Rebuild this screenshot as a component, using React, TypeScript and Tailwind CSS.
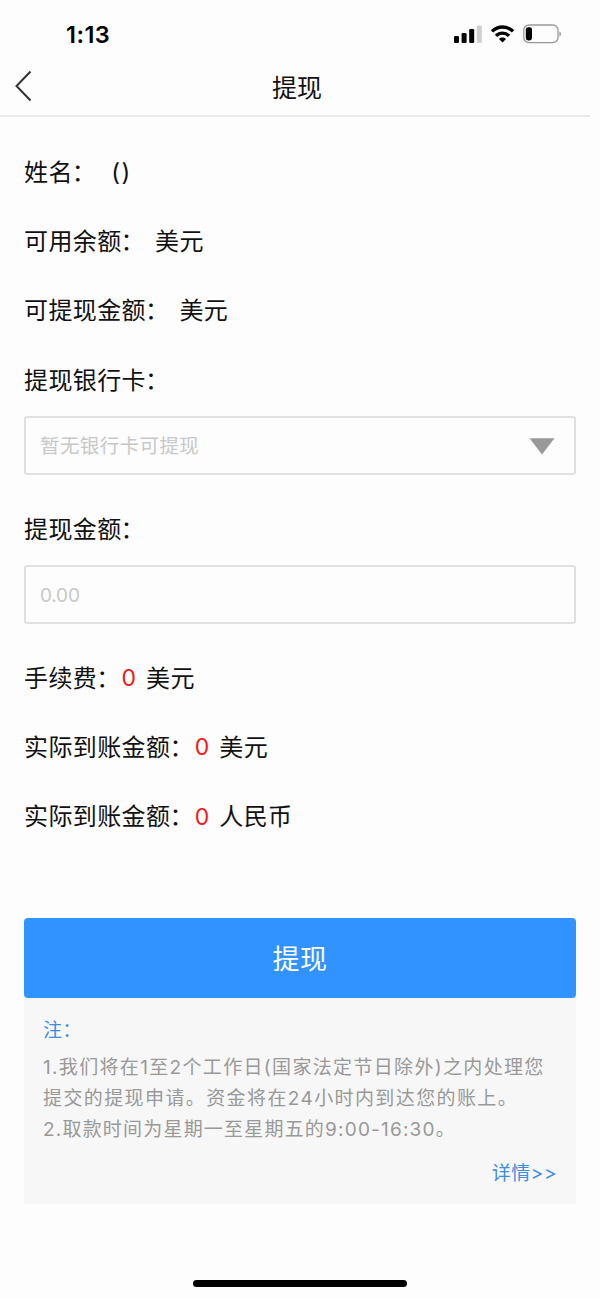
import type { ReactNode } from "react";

function StatusBar() {
  return (
    <div className="flex h-[58px] items-center justify-between pt-[10px] pl-[66px] pr-[38px]">
      <span className="pt-px text-[23.5px] leading-none font-semibold tracking-[0.5px] text-black">1:13</span>
      <div className="flex items-center">
        <svg className="block" width="28" height="18" viewBox="0 0 28 18">
          <rect x="0" y="11" width="5" height="7" rx="1.3" fill="#000" />
          <rect x="7.6" y="8" width="5" height="10" rx="1.3" fill="#000" />
          <rect x="15.2" y="4" width="5" height="14" rx="1.3" fill="#000" />
          <rect x="22.8" y="0.5" width="5" height="17.5" rx="1.3" fill="#cfcfcf" />
        </svg>
        <svg className="ml-[9px] block" width="23" height="18" viewBox="0 0 23 18">
          <g fill="none" stroke="#000" strokeWidth="3.3">
            <path d="M1 6.4C7 0.5 16 0.5 22 6.4" />
            <path d="M5 10.9C8.8 7.2 14.2 7.2 18 10.9" />
          </g>
          <path d="M11.5 17.4L8 13.9C10 12 13 12 15 13.9Z" fill="#000" />
        </svg>
        <svg className="ml-[9px] block" width="39" height="20" viewBox="0 0 39 20">
          <rect x="0.75" y="1" width="34.3" height="17.6" rx="5.2" fill="none" stroke="#999" strokeWidth="1.3" />
          <rect x="2.8" y="3.2" width="6.2" height="13.2" rx="2.4" fill="#000" />
          <path d="M36.4 7.4C38.6 8.2 38.6 11.4 36.4 12.2Z" fill="#999" />
        </svg>
      </div>
    </div>
  );
}

function Label({ children }: { children: ReactNode }) {
  return (
    <span className="whitespace-nowrap">
      {children}
      <span className="-ml-px mr-px">：</span>
    </span>
  );
}

function Row({ children }: { children: ReactNode }) {
  return <div className="flex h-[69.3px] items-center whitespace-pre pt-[2px]">{children}</div>;
}

function Amount({ label, unit }: { label: string; unit: string }) {
  return (
    <Row>
      <Label>{label}</Label>
      <span className="-ml-[1px] mr-[9px] w-[16.5px] text-center text-[23px] tracking-normal text-[#f01818]">0</span>
      <span>{unit}</span>
    </Row>
  );
}

export default function App() {
  return (
    <div className="flex h-[1299px] w-[600px] flex-col bg-[#fdfdfd] font-['Inter','Noto_Sans_CJK_SC',sans-serif] text-[#111]">
      <StatusBar />
      <header className="mr-[10px] grid h-[59px] grid-cols-[60px_1fr_50px] items-center border-b-2 border-[#e8e8e8]">
        <svg className="-mt-[2px] ml-[14px] block" width="19" height="32" viewBox="0 0 19 32">
          <path d="M16.5 1.5L2.5 16L16.5 30.5" fill="none" stroke="#333" strokeWidth="2" />
        </svg>
        <h1 className="pt-[3px] pr-[6px] text-center text-[25px] leading-none">提现</h1>
      </header>

      <main className="px-[24px] pt-[20px] text-[24px] leading-none tracking-[0.4px]">
        <Row>
          <Label>姓名</Label>
          <span className="ml-[14px] tracking-[1.5px]">()</span>
        </Row>
        <Row>
          <Label>可用余额</Label>
          <span className="ml-[9px]">美元</span>
        </Row>
        <Row>
          <Label>可提现金额</Label>
          <span className="ml-[9px]">美元</span>
        </Row>
        <div className="flex h-[71px] items-center pt-[2px]">
          <Label>提现银行卡</Label>
        </div>
        <div className="flex h-[59px] items-center justify-between rounded-[3px] border-2 border-[#e0e0e0] pr-[19px] pl-[14px] text-[19.5px] text-[#c8c8c8]">
          <span className="pt-[3px]">暂无银行卡可提现</span>
          <svg className="mt-[3px] block" width="26" height="17" viewBox="0 0 26 17">
            <path d="M0.5 0.3H25.5L13 16.5Z" fill="#999" />
          </svg>
        </div>
        <div className="mt-[17px] flex h-[73px] items-center pt-[3px]">
          <Label>提现金额</Label>
        </div>
        <div className="flex h-[59px] items-center rounded-[3px] border-2 border-[#e0e0e0] pt-[2px] pl-[14px] text-[19px] tracking-[-0.2px] text-[#c8c8c8]">
          0.00
        </div>
        <div className="mt-[19px]">
          <Amount label="手续费" unit="美元" />
          <Amount label="实际到账金额" unit="美元" />
          <Amount label="实际到账金额" unit="人民币" />
        </div>
        <button className="mt-[67px] flex h-[80px] w-full items-center justify-center rounded-[4px] bg-[#3193ff] pt-[3px] text-[27px] leading-none text-white">
          提现
        </button>
        <section className="h-[206px] bg-[#f7f7f7] px-[19px] pt-[17px] text-[19px] leading-[31px] tracking-[1.33px] text-[#999]">
          <div className="text-[#3b8de0]">
            <Label>注</Label>
          </div>
          <div className="mt-[6px] whitespace-nowrap">
            <p>1.我们将在1至2个工作日(国家法定节日除外)之内处理您</p>
            <p className="tracking-[1.4px]">提交的提现申请。资金将在24小时内到达您的账上。</p>
            <p className="tracking-[1.2px]">2.取款时间为星期一至星期五的9:00-16:30。</p>
          </div>
          <div className="mt-[13px] text-right tracking-[0.5px] text-[#3b8de0]">详情&gt;&gt;</div>
        </section>
      </main>

      <div className="mt-[76px] ml-[193px] h-[7px] w-[214px] rounded-full bg-black" />
    </div>
  );
}
